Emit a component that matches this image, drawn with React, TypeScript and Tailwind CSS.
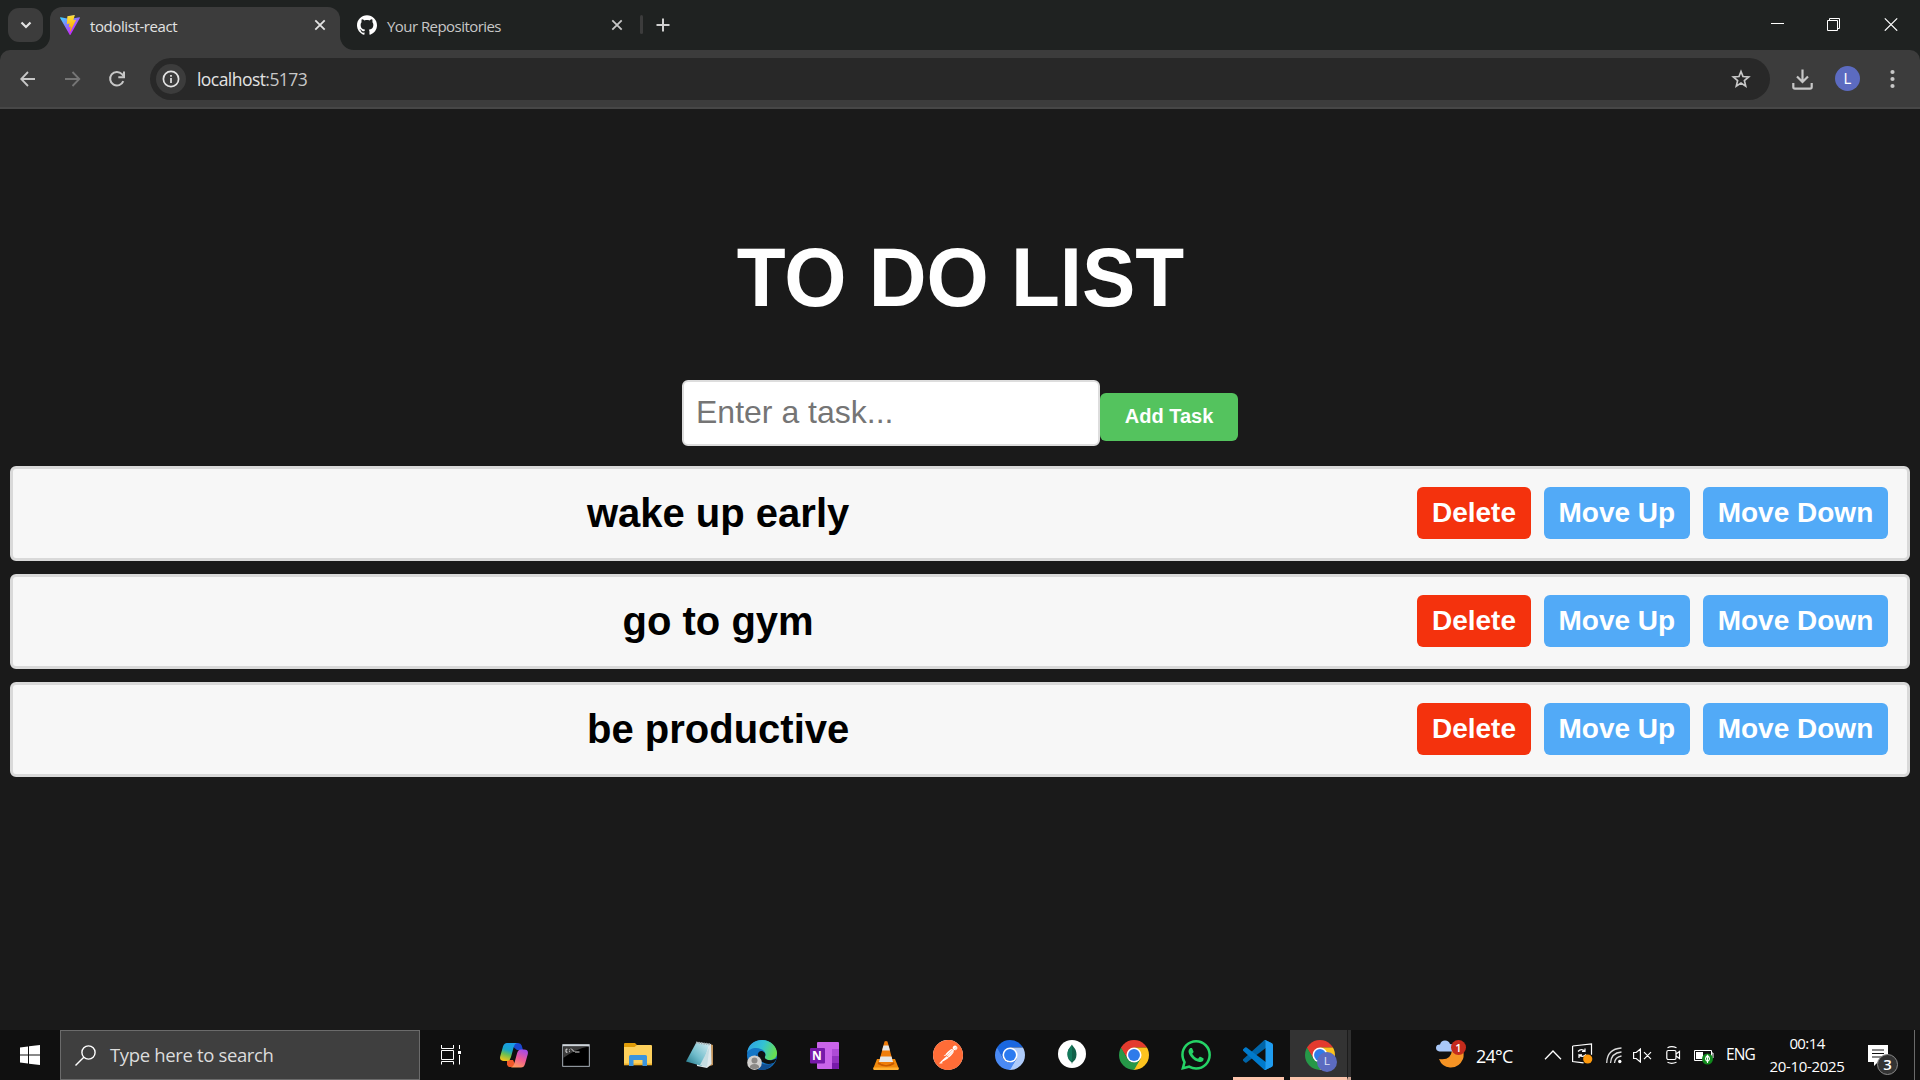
import React from "react";
import { SiGithub, SiPostman, SiWhatsapp } from "react-icons/si";

const UI = "font-['Open_Sans','Noto_Sans',sans-serif]";

function ViteLogo() {
  return (
    <svg width="20" height="20" viewBox="0 0 256 257">
      <defs>
        <linearGradient id="va" x1="-.8%" x2="57.6%" y1="7.7%" y2="78.4%">
          <stop offset="0%" stopColor="#41D1FF" />
          <stop offset="100%" stopColor="#BD34FE" />
        </linearGradient>
        <linearGradient id="vb" x1="43.4%" x2="50.3%" y1="2.2%" y2="89%">
          <stop offset="0%" stopColor="#FFEA83" />
          <stop offset="8.3%" stopColor="#FFDD35" />
          <stop offset="100%" stopColor="#FFA800" />
        </linearGradient>
      </defs>
      <path fill="url(#va)" d="M255.153 37.938L134.897 252.976c-2.483 4.44-8.862 4.466-11.382.048L.875 37.958c-2.746-4.814 1.371-10.646 6.827-9.67l120.385 21.517a6.537 6.537 0 0 0 2.322-.004l117.867-21.483c5.438-.991 9.574 4.796 6.877 9.62Z" />
      <path fill="url(#vb)" d="M185.432.063L96.44 17.501a3.268 3.268 0 0 0-2.634 3.014l-5.474 92.456a3.268 3.268 0 0 0 3.997 3.378l24.777-5.718c2.318-.535 4.413 1.507 3.936 3.838l-7.361 36.047c-.495 2.426 1.782 4.5 4.151 3.78l15.304-4.649c2.372-.72 4.652 1.36 4.15 3.788l-11.698 56.621c-.732 3.542 3.979 5.473 5.943 2.437l1.313-2.028l72.516-144.72c1.215-2.423-.88-5.186-3.54-4.672l-25.505 4.922c-2.396.462-4.435-1.77-3.759-4.114l16.646-57.705c.677-2.35-1.37-4.583-3.769-4.113Z" />
    </svg>
  );
}

function CloseX({ color }: { color: string }) {
  return (
    <svg width="12" height="12" viewBox="0 0 12 12" fill="none" stroke={color} strokeWidth="1.8">
      <path d="M1.3 1.3 10.7 10.7M10.7 1.3 1.3 10.7" />
    </svg>
  );
}

function TabStrip() {
  return (
    <div className="flex h-[50px] bg-[#1f2221]">
      <div className="mt-2 ml-2 flex h-[34px] w-[35px] items-center justify-center rounded-[11px] bg-[#3c3c3c]">
        <svg width="12" height="8" viewBox="0 0 12 8" fill="none" stroke="#e3e3e3" strokeWidth="2.2">
          <path d="M1.5 1.5 6 6l4.5-4.5" />
        </svg>
      </div>
      <div className="relative mt-[7px] ml-[7px] flex h-[43px] w-[290px] rounded-t-[12px] bg-[#3c3c3c]">
        <svg className="absolute bottom-0 -left-[14px]" width="14" height="14" viewBox="0 0 14 14">
          <path d="M14 0v14H0A14 14 0 0 0 14 0" fill="#3c3c3c" />
        </svg>
        <svg className="absolute -right-[14px] bottom-0" width="14" height="14" viewBox="0 0 14 14">
          <path d="M0 0v14h14A14 14 0 0 1 0 0" fill="#3c3c3c" />
        </svg>
        <div className="flex h-9 w-full items-center pr-[14px] pl-[10px]">
          <ViteLogo />
          <span className={`ml-[10px] pt-[2px] text-[15px] tracking-[-0.4px] text-[#e3e3e3] ${UI}`}>todolist-react</span>
          <span className="ml-auto">
            <CloseX color="#e3e3e3" />
          </span>
        </div>
      </div>
      <div className="mt-[7px] flex h-9 w-[303px] items-center pr-5 pl-[17px]">
        <SiGithub size={20} color="#fff" />
        <span className={`ml-[10px] pt-[2px] text-[15px] tracking-[-0.55px] text-[#c7c7c7] ${UI}`}>Your Repositories</span>
        <span className="ml-auto">
          <CloseX color="#c7c7c7" />
        </span>
      </div>
      <div className="mt-[15px] -ml-[3px] h-[19px] w-[3px] rounded-full bg-[#3c3c3c]" />
      <svg className="mt-[18px] ml-[13px]" width="14" height="14" viewBox="0 0 14 14" stroke="#d0d0d0" strokeWidth="2">
        <path d="M7 .5v13M.5 7h13" />
      </svg>
      <div className="mt-[17px] mr-[21px] ml-auto flex">
        <svg width="14" height="14" viewBox="0 0 14 14" stroke="#fff" strokeWidth="1">
          <path d="M0 6.5h13" />
        </svg>
        <svg className="ml-[42px]" width="15" height="15" viewBox="0 0 15 15" fill="none" stroke="#fff" strokeWidth="1">
          <path d="M.5 3.5h10v10H.5zM2.5 3V1.5h10v10H11" />
        </svg>
        <svg className="mr-px ml-[42px]" width="14" height="14" viewBox="0 0 14 14" stroke="#fff" strokeWidth="1.2">
          <path d="M.8 1.3 13.2 13.7M13.2 1.3.8 13.7" />
        </svg>
      </div>
    </div>
  );
}

function Toolbar() {
  return (
    <div className="bg-[#1f2221]">
      <div className="flex h-[59px] items-start rounded-t-[10px] border-b-2 border-[#474747] bg-[#3c3c3c] pt-2">
        <div className="flex h-[42px] w-[150px] items-center pl-5">
          <svg width="16" height="16" viewBox="0 0 16 16" fill="none" stroke="#c7c7c7" strokeWidth="1.8">
            <path d="M15 8H1.5M8 1 1.2 8 8 15" />
          </svg>
          <svg className="ml-[29px]" width="16" height="16" viewBox="0 0 16 16" fill="none" stroke="#757575" strokeWidth="1.8">
            <path d="M0 8h13.5M7.5 1l6.8 7-6.8 7" />
          </svg>
          <svg className="ml-[27px]" width="18" height="18" viewBox="0 0 18 18" fill="none" stroke="#c7c7c7" strokeWidth="2">
            <path d="M15.3 11.2A6.8 6.8 0 1 1 14 4.200L15.5 6" />
            <path d="M16 1.500v5.700h-5.700" />
          </svg>
        </div>
        <div className="flex h-[42px] w-[1620px] items-center rounded-full bg-[#282828] pr-[19px] pl-[6px]">
          <span className="flex h-[30px] w-[30px] items-center justify-center rounded-full bg-[#3c3c3c]">
            <svg width="18" height="18" viewBox="0 0 18 18" fill="none" stroke="#e3e3e3" strokeWidth="1.7">
              <circle cx="9" cy="9" r="7.6" />
              <path d="M9 8v5M9 5v1.8" />
            </svg>
          </span>
          <span className={`ml-[11px] pt-px text-[17.5px] tracking-[-0.55px] text-[#e3e3e3] ${UI}`}>
            localhost<span className="text-[#c7c7c7]">:5173</span>
          </span>
          <svg className="ml-auto" width="20" height="20" viewBox="0 0 20 20" fill="none" stroke="#c7c7c7" strokeWidth="1.7">
            <path d="M10 2.500l2 5 5.700.4-4.300 3.700 1.300 5.500-4.700-3-4.700 3 1.300-5.500L2.300 7.900 8 7.500z" />
          </svg>
        </div>
        <svg className="mt-[10px] ml-[22px]" width="21" height="22" viewBox="0 0 21 22" fill="none" stroke="#c7c7c7" strokeWidth="2.2">
          <path d="M10.500 1.500v12M5 8.500l5.500 5.500L16 8.500M1.300 15v4q0 1.700 1.700 1.700h15q1.700 0 1.700-1.700v-4" />
        </svg>
        <span className="mt-2 ml-[22px] flex h-[25px] w-[25px] items-center justify-center rounded-full bg-[#5c6bc0] pt-px font-[Roboto] text-[14px] text-white">L</span>
        <svg className="mt-[11px] ml-[30px]" width="5" height="20" viewBox="0 0 5 20" fill="#c7c7c7">
          <circle cx="2.5" cy="3" r="2.1" />
          <circle cx="2.5" cy="10" r="2.1" />
          <circle cx="2.5" cy="17" r="2.1" />
        </svg>
      </div>
    </div>
  );
}

function TodoPage() {
  const tasks = ["wake up early", "go to gym", "be productive"];
  const btn = "mb-px h-[52px] rounded-[6px] px-[15px] text-[28px] font-bold text-white";
  return (
    <main className="h-[921px] bg-[#1a1a1a] px-[10px] font-['Liberation_Sans',Arial,sans-serif]">
      <h1 className="origin-[50%_199px] scale-y-[1.05] pt-[124px] pl-px text-center text-[80px] leading-[92px] font-bold text-white">TO DO LIST</h1>
      <div className="mt-[55px] flex h-[66px] justify-center">
        <input
          className="h-[66px] w-[418px] rounded-[6px] border-2 border-[#ddd] bg-white px-3 pb-[2px] text-[32px] placeholder:text-[#757575]"
          placeholder="Enter a task..."
        />
        <button className="mt-[13px] h-12 w-[138px] rounded-[6px] bg-[#54c35e] pb-[2px] text-[20px] font-bold text-white">Add Task</button>
      </div>
      <ol className="mt-5 flex flex-col gap-[13px]">
        {tasks.map((t) => (
          <li key={t} className="flex h-[95px] items-center gap-[12.5px] rounded-[6px] border-3 border-[#d9d9d9] bg-[#f7f7f7] px-[18.75px]">
            <span className="flex-1 pb-[2px] text-center text-[40px] font-bold text-black">{t}</span>
            <button className={`${btn} bg-[#f4320d]`}>Delete</button>
            <button className={`${btn} bg-[#52aaf7]`}>Move Up</button>
            <button className={`${btn} bg-[#52aaf7]`}>Move Down</button>
          </li>
        ))}
      </ol>
    </main>
  );
}

function ChromeIcon({ blue = false, id }: { blue?: boolean; id: string }) {
  const [a, b, c] = blue ? ["#1a67e0", "#aecbfa", "#4a8af4"] : ["#e33b2e", "#fcc31e", "#269848"];
  return (
    <svg width="30" height="30" viewBox="0 0 48 48">
      <clipPath id={id}>
        <circle cx="24" cy="24" r="24" />
      </clipPath>
      <g clipPath={`url(#${id})`}>
        <path d="M0 0h48v12H24L13.600 30 0 8z" fill={a} />
        <path d="M24 12h24v36H22l12.400-18z" fill={b} />
        <path d="M3.200 12 13.600 30Q18 36 24 36l10.400-6L23 50H-4V8z" fill={c} />
      </g>
      <circle cx="24" cy="24" r="12" fill="#fff" />
      <circle cx="24" cy="24" r="9.5" fill={blue ? "#2a7af0" : "#2f7bea"} />
    </svg>
  );
}

function TaskView() {
  return (
    <svg className="mr-[2px]" width="20" height="20" viewBox="0 0 20 20" fill="none" stroke="#fff" strokeWidth="1">
      <path d="M.5 0v3.500h12V0M.5 5.500h12v9H.5zM.5 19.500v-3h12v3M18.500 0v4M18.500 10v9.500" />
      <path d="M17 6h3v3h-3z" fill="#fff" stroke="none" />
    </svg>
  );
}

function Copilot() {
  return (
    <svg width="28" height="26" viewBox="0 0 28 26">
      <defs>
        <linearGradient id="c1" x1="0.6" y1="0" x2="0.3" y2="1">
          <stop offset="0" stopColor="#1a9be8" />
          <stop offset=".4" stopColor="#18a5c8" />
          <stop offset=".65" stopColor="#6bbf52" />
          <stop offset="1" stopColor="#f5c518" />
        </linearGradient>
        <linearGradient id="c2" x1="0.7" y1="0" x2="0.3" y2="1">
          <stop offset="0" stopColor="#a44be8" />
          <stop offset=".5" stopColor="#ee5a96" />
          <stop offset="1" stopColor="#ff9a5c" />
        </linearGradient>
      </defs>
      <path d="M14 1h4q3 0 3.700 2.500L23 8h-6L12 4z" fill="#1b48d0" />
      <path d="M7 18h6l3 6q-1 1-3 1h-3q-2.500 0-3-2.500z" fill="#f0592a" />
      <path d="M7 1h10q-2.500.6-3.300 4L11 15q-1 4-4 4H4q-5 0-3.700-5L3 4.500Q4 1 7 1z" fill="url(#c1)" />
      <path d="M21 25.500H11q2.500-.6 3.300-4L17 11.500q1-4 4-4h3q5 0 3.700 5L25 22q-1 3.500-4 3.500z" fill="url(#c2)" />
    </svg>
  );
}

function Terminal() {
  return (
    <svg width="28" height="23" viewBox="0 0 28 23">
      <rect width="28" height="23" rx="1" fill="#8d949b" />
      <rect x=".8" y=".5" width="26.400" height="1.800" fill="#cfd5da" />
      <rect x="1.200" y="2.600" width="25.600" height="19.200" fill="#000" />
      <path d="M1.200 2.600h25.600Q14 5 1.200 14z" fill="#3c3c3c" />
      <path d="M5.500 5.200H4v3h1.500M7.500 5.500v.8M7.500 7.300v.8M9 4.500l3.500 3.500M13 8h4.500" stroke="#ddd" fill="none" strokeWidth="1" />
    </svg>
  );
}

function Folder() {
  return (
    <svg width="28" height="24" viewBox="0 0 28 24">
      <path d="M0 1q0-1 1-1h10l2.500 2.500H26V8H0z" fill="#e09c08" />
      <path d="M0 4h10.500L13 2h14q1 0 1 1v19H0z" fill="#fdd05c" />
      <path d="M0 20.500h28v1.800H0z" fill="#eeb02a" />
      <path d="M5 23v-9.500q0-1.500 1.500-1.500h15q1.500 0 1.500 1.500V23h-4.500v-6h-9v6z" fill="#3b94dd" />
    </svg>
  );
}

function Notepad() {
  return (
    <svg width="28" height="28" viewBox="0 0 28 28">
      <defs>
        <linearGradient id="np" x1="1" y1="0" x2="0" y2="1">
          <stop offset="0" stopColor="#cfeaf0" />
          <stop offset=".55" stopColor="#70bccb" />
          <stop offset="1" stopColor="#1b7285" />
        </linearGradient>
      </defs>
      <path d="m24 3 3 1v20l-6 2z" fill="#c2935a" />
      <path d="M10 1 25 3l.5 20L21 27l-10-2z" fill="#dfe9ec" />
      <path d="M10 2 23 4 16 25 0 20.500z" fill="url(#np)" />
      <path d="M10 1.500 25 3.500" stroke="#9aa9ad" strokeWidth="2" strokeDasharray="1.500 1" />
      <path d="M23.500 6 21 26l-7-2z" fill="#c6dde2" />
    </svg>
  );
}

function Edge() {
  return (
    <svg width="30" height="30" viewBox="0 0 30 30">
      <defs>
        <linearGradient id="e1" x1="0" y1=".2" x2="1" y2=".5">
          <stop offset="0" stopColor="#2f9fe6" />
          <stop offset=".5" stopColor="#33c2d4" />
          <stop offset="1" stopColor="#69e04e" />
        </linearGradient>
      </defs>
      <circle cx="15" cy="15" r="15" fill="#1476c6" />
      <path d="M0 13C1 5 7 0 15 0c9 0 15 7 15 13 0 5-4 7-7 7-4 0-6-1.500-5-3.200C20 13 16 8 9 8 5 8 1 10 0 13z" fill="url(#e1)" />
      <path d="M11 14c0-2 2-3.500 4-3 3 1 4 3 3 5.500-1 2 2 4.200 6 3.800 2-.2 4-1 5.500-1.800-.8 2-2 3.500-3 4.500C18 26 11 21 11 14z" fill="#101010" />
      <path d="M11 13C8 20 14 28 26.500 23 23 28 18 31 13 30 6 28 5 18 11 13z" fill="#114e91" />
      <circle cx="7.500" cy="22.700" r="7.300" fill="#d2d0ce" />
      <circle cx="7.500" cy="20.500" r="3" fill="#8a8886" />
      <path d="M2.800 27.500q0-3.500 4.700-3.500t4.700 3.500q-4.700 3.500-9.400 0z" fill="#8a8886" />
    </svg>
  );
}

function OneNote() {
  return (
    <span className="relative block h-[27px] w-[29px]">
      <svg width="29" height="27" viewBox="0 0 29 27">
        <rect x="7" width="22" height="27" rx="1" fill="#ca64ea" />
        <path d="M22 7h7v7h-7z" fill="#ae4bd5" />
        <path d="M22 14h7v6.500h-7z" fill="#9332bf" />
        <path d="M22 20.500h7V26q0 1-1 1h-6z" fill="#7719aa" />
        <rect y="6" width="15" height="15.500" rx="1" fill="#7719aa" />
      </svg>
      <span className="absolute top-[6px] left-0 w-[15px] text-center font-['Open_Sans'] text-[12px] leading-[15px] font-bold text-white">N</span>
    </span>
  );
}

function Vlc() {
  return (
    <svg width="26" height="30" viewBox="0 0 26 30">
      <defs>
        <clipPath id="cone">
          <path d="M11.500 1.500q1.500-1 3 0L20 22q-7 5-14 0z" />
        </clipPath>
      </defs>
      <path d="M4 19h18l4 10H0z" fill="#f28a0c" />
      <path d="M.5 27.500h25V30H.5z" fill="#ffb032" />
      <path d="M5.500 22q7.500 6 15 0l1 2q-8 5-17 0z" fill="#c85a00" />
      <g clipPath="url(#cone)">
        <path d="M0 0h26v30H0z" fill="#f07d0a" />
        <path d="M0 5.500h26v5H0zM0 16.500h26v5.500H0z" fill="#e6e6e6" />
      </g>
    </svg>
  );
}

function Postman() {
  return (
    <span className="rounded-full bg-white">
      <SiPostman size={30} color="#ff6c37" />
    </span>
  );
}

function Mongo() {
  return (
    <svg className="mb-[2px]" width="28" height="28" viewBox="0 0 28 28">
      <circle cx="14" cy="14" r="14" fill="#fff" />
      <path d="M14 4.500c1 2.500 4.500 4 4.500 10 0 4-2 6.500-4 7.700l-.5 1.800-.5-1.800c-2-1.200-4-3.700-4-7.700 0-6 3.500-7.500 4.500-10z" fill="#116149" />
      <path d="M14 4.500v17c-2.500-1.200-4.500-3.500-4.500-7 0-6 3.500-7.500 4.500-10z" fill="#13795b" />
    </svg>
  );
}

function VSCode() {
  return (
    <svg width="30" height="30" viewBox="0 0 100 100">
      <path d="M96.500 10.800 75.900.9a6.200 6.200 0 0 0-7.100 1.200L1.300 63.600a4.200 4.200 0 0 0 0 6.200l5.500 5a4.200 4.200 0 0 0 5.300.2l81.200-61.600c2.700-2.100 6.700-.1 6.700 3.300v-.2a6.300 6.300 0 0 0-3.500-5.700z" fill="#0065a9" />
      <path d="m96.500 89.200-20.600 9.900a6.200 6.200 0 0 1-7.100-1.200L1.300 36.400a4.200 4.200 0 0 1 0-6.200l5.500-5a4.200 4.200 0 0 1 5.300-.2l81.200 61.600c2.700 2.100 6.700.1 6.700-3.300v.2a6.300 6.300 0 0 1-3.500 5.700z" fill="#007acc" />
      <path d="M75.900 99.100a6.200 6.200 0 0 1-7.100-1.200c2.300 2.300 6.200.7 6.200-2.600V4.700c0-3.300-3.900-4.900-6.200-2.600a6.200 6.200 0 0 1 7.100-1.200l20.600 9.900a6.300 6.300 0 0 1 3.500 5.700v67a6.300 6.300 0 0 1-3.500 5.700z" fill="#1f9cf0" />
    </svg>
  );
}

function TaskIcon({ children }: { children: React.ReactNode }) {
  return <div className="flex h-[50px] w-[62px] shrink-0 items-center justify-center pl-[2px]">{children}</div>;
}

function Tray() {
  return (
    <div className={`flex h-[50px] items-center text-white ${UI}`}>
      <span className="relative block h-[30px] w-[30px]">
        <svg width="30" height="30" viewBox="0 0 30 30">
          <path d="M3 19q12 2 13-9l4-5q10 4 7 14-4 9-13 8.500Q6 27 3 19z" fill="#f59324" />
          <path d="M3.500 11.500Q0 11 0 7.800T4 4.500Q5 .5 9 .5T14 4q5 0 5 4t-4 3.500z" fill="#a9c8f8" />
          <circle cx="22.500" cy="7.500" r="7.500" fill="#c42b1c" />
        </svg>
        <span className="absolute top-0 left-[15px] w-[15px] text-center text-[11px] leading-[15px] font-semibold">1</span>
      </span>
      <span className="ml-[10px] w-[50px] pt-px text-[18px] leading-[20px] tracking-[-0.8px]">24°C</span>
      <svg className="ml-[18px]" width="18" height="10" viewBox="0 0 18 10" fill="none" stroke="#fff" strokeWidth="1.3">
        <path d="M1 9.200 9 1l8 8.200" />
      </svg>
      <svg className="mr-px mb-[3px] ml-[10px]" width="21" height="21" viewBox="0 0 21 21" fill="none" stroke="#fff" strokeWidth="1.2">
        <path d="M.6 3 19.500.8v11M.6 3v15.500l11 1.300" />
        <path d="M6 8.500q3-3.500 7-.5V5.500M13 8.300h-3M14 11.500q-3 3.500-7 .5v3M7 11.800h3" />
        <circle cx="15.700" cy="16" r="4.600" fill="#ff9a0c" stroke="none" />
      </svg>
      <svg className="ml-[12px]" width="16" height="17" viewBox="0 0 16 17" fill="none" stroke="#fff" strokeWidth="1.3">
        <path d="M.7 16Q1 2 15.500 1M4.500 16Q5 6 15.500 5M8.500 16Q9 10 15.500 9" opacity=".85" />
        <circle cx="13.800" cy="14.500" r="1.700" fill="#fff" stroke="none" />
      </svg>
      <svg className="ml-[11px]" width="19" height="15" viewBox="0 0 19 15" fill="none" stroke="#fff" strokeWidth="1.2">
        <path d="M.6 4.500h2.600L7.400 1v13l-4.200-3.500H.6zM11 4.200l7 7M18 4.200l-7 7" />
      </svg>
      <svg className="ml-[14px]" width="15" height="18" viewBox="0 0 15 18" fill="none" stroke="#fff" strokeWidth="1.2">
        <rect x=".8" y="4.500" width="9.200" height="9" rx="1.500" />
        <path d="m10 8 3.500-2.500v7L10 10M1.500 1.700q4-2 9 0M1.500 16.300q4 2 9 0" />
      </svg>
      <span className="mt-[2px] ml-[13px] block h-[16px] w-[20px]">
        <svg width="20" height="17" viewBox="0 0 20 17">
          <path d="M.5 2.500h17v10H.5zM18 5h1v5h-1" stroke="#fff" fill="none" />
          <path d="M2 4h7v7H2z" fill="#fff" />
          <circle cx="13.500" cy="11" r="5.500" fill="#108a1c" />
          <path d="M13.500 7.500q-4 3.500 0 6 4-2.500 0-6v7.500" stroke="#fff" fill="none" strokeWidth="1.1" />
        </svg>
      </span>
      <span className="ml-[12px] w-[30px] text-[15.5px] tracking-[-0.9px]">ENG</span>
      <span className="ml-[11px] flex w-[80px] flex-col items-center text-[15px] leading-[23px] tracking-[-0.35px]">
        <span className="tracking-[-0.6px]">00:14</span>
        <span className="whitespace-nowrap">20-10-2025</span>
      </span>
      <span className="relative mt-[10px] ml-[21px] block h-[30px] w-[30px]">
        <svg width="31" height="31" viewBox="0 0 31 31">
          <path d="M0 0h20v17H10l-4 4v-4H0z" fill="#fff" />
          <path d="M4 5h12M4 8.500h12M4 12h12" stroke="#111" strokeWidth="1" />
          <circle cx="19.500" cy="19.500" r="10" fill="#333" stroke="#8a8a8a" />
        </svg>
        <span className="absolute top-[9px] left-[9.5px] w-[20px] text-center text-[15px] leading-[20px] font-semibold">3</span>
      </span>
      <span className="ml-4 block h-[50px] w-px bg-[#6a6a6a]" />
    </div>
  );
}

function Taskbar() {
  return (
    <div className="flex h-[50px] bg-[#101010]">
      <div className="flex w-[60px] items-center justify-center">
        <svg width="20" height="20" viewBox="0 0 20 20" fill="#fff">
          <path d="M0 2.600 8 1.500v8H0zM9 1.300 20 0v9.500H9zM0 10.500h8v8L0 17.400zM9 10.500h11V20L9 18.700z" />
        </svg>
      </div>
      <div className="flex w-[360px] items-center border border-[#6b6b6b] bg-[#3f3f3f] pl-[14px]">
        <svg width="21" height="21" viewBox="0 0 21 21" fill="none" stroke="#fff" strokeWidth="1.4">
          <circle cx="13.500" cy="7.500" r="6.600" />
          <path d="M8.800 12.200.5 20.500" />
        </svg>
        <span className={`ml-[14px] text-[18.5px] tracking-[-0.35px] text-[#dcdcdc] ${UI}`}>Type here to search</span>
      </div>
      <TaskIcon><TaskView /></TaskIcon>
      <TaskIcon><Copilot /></TaskIcon>
      <TaskIcon><Terminal /></TaskIcon>
      <TaskIcon><Folder /></TaskIcon>
      <TaskIcon><Notepad /></TaskIcon>
      <TaskIcon><Edge /></TaskIcon>
      <TaskIcon><OneNote /></TaskIcon>
      <TaskIcon><Vlc /></TaskIcon>
      <TaskIcon><Postman /></TaskIcon>
      <TaskIcon><ChromeIcon blue id="cr1" /></TaskIcon>
      <TaskIcon><Mongo /></TaskIcon>
      <TaskIcon><ChromeIcon id="cr2" /></TaskIcon>
      <TaskIcon><SiWhatsapp size={30} color="#25d366" /></TaskIcon>
      <div className="ml-[7px] flex h-[50px] w-[51px] items-center justify-center border-b-3 border-[#fcc4ac] pt-[3px] pr-px">
        <VSCode />
      </div>
      <div className="ml-[6px] flex h-[50px] w-[57px] items-center justify-center border-b-3 border-[#fcc4ac] bg-[#333] pt-[3px] pl-[3px]">
        <span className="relative block h-[30px] w-[30px]">
          <ChromeIcon id="cr3" />
          <span className="absolute top-[12px] left-[12px] flex h-[20px] w-[20px] items-center justify-center rounded-full bg-[#5c6bc0] font-[Roboto] text-[11px] text-[#dfe2f5]">L</span>
        </span>
      </div>
      <div className="h-[50px] w-[4px] border-b-3 border-l border-b-[#d0a593] border-l-[#1c1c1c] bg-[#2f2f2f]" />
      <div className="mr-[5px] ml-auto">
        <Tray />
      </div>
    </div>
  );
}

export default function App() {
  return (
    <div className="h-[1080px] w-[1920px] overflow-hidden bg-[#1a1a1a]">
      <TabStrip />
      <Toolbar />
      <TodoPage />
      <Taskbar />
    </div>
  );
}
